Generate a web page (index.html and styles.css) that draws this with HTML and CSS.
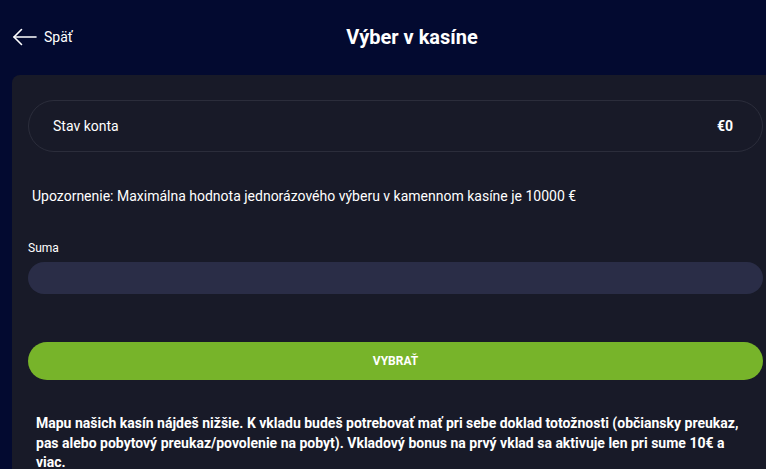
FILE: index.html
```html
<!DOCTYPE html>
<html lang="sk">
<head>
  <meta charset="UTF-8">
  <meta name="viewport" content="width=device-width, initial-scale=1.0">
  <title>Výber v kasíne</title>
  <link rel="stylesheet" href="styles.css">
</head>
<body>
  <header class="topbar">
    <a class="back" href="#">
      <svg class="back-icon" width="25" height="18" viewBox="0 0 25 18" fill="none" stroke="#fff" stroke-width="1.6" stroke-linecap="round" stroke-linejoin="round">
        <path d="M24 9H2"/>
        <path d="M9.5 1.5L2 9l7.5 7.5"/>
      </svg>
      <span>Späť</span>
    </a>
    <h1>Výber v kasíne</h1>
  </header>

  <div class="card">
    <!-- balance -->
    <div class="balance">
      <span>Stav konta</span>
      <strong>€0</strong>
    </div>

    <p class="notice">Upozornenie: Maximálna hodnota jednorázového výberu v kamennom kasíne je 10000 €</p>

    <label class="field-label" for="amount">Suma</label>
    <input class="field" type="text" id="amount">

    <button class="submit">VYBRAŤ</button>

    <p class="info">Mapu našich kasín nájdeš nižšie. K vkladu budeš potrebovať mať pri sebe doklad totožnosti (občiansky preukaz, pas alebo pobytový preukaz/povolenie na pobyt). Vkladový bonus na prvý vklad sa aktivuje len pri sume 10€ a viac.</p>
  </div>
</body>
</html>
```
FILE: styles.css
```css
body {
  margin: 0;
  background-color: #030a30;
  color: #fff;
  font-family: 'Roboto', 'Liberation Sans', sans-serif;
  overflow: hidden;
}
.topbar {
  position: relative;
  height: 75px;
  display: flex;
  align-items: center;
  justify-content: center;
}
.back {
  position: absolute;
  left: 12px;
  top: 28px;
  display: flex;
  align-items: center;
  gap: 7px;
  color: #fff;
  text-decoration: none;
  font-size: 14px;
}
h1 {
  margin: 0 0 2px 58px;
  font-size: 20px;
  font-weight: 700;
}
.card {
  margin-left: 12px;
  padding: 25px 3px 20px 16px;
  background-color: #181a28;
  border-radius: 8px 0 0 0;
  min-height: 400px;
}
.balance {
  height: 50px;
  display: flex;
  align-items: center;
  justify-content: space-between;
  padding: 0 29px 0 24px;
  border: 1px solid #2b2d3b;
  border-radius: 26px;
  font-size: 14px;
}
.notice {
  margin: 35px 0 0 4px;
  font-size: 14px;
  line-height: 18px;
}
.field-label {
  display: block;
  margin-top: 36px;
  font-size: 12px;
}
.field {
  display: block;
  box-sizing: border-box;
  width: 100%;
  height: 32px;
  margin-top: 7px;
  border: none;
  border-radius: 16px;
  background-color: #2a2d47;
}
.submit {
  display: block;
  width: 100%;
  height: 38px;
  margin-top: 48px;
  border: none;
  border-radius: 19px;
  background-color: #77b42a;
  color: #fff;
  font-family: inherit;
  font-size: 12px;
  font-weight: 700;
}
.info {
  margin: 34px 20px 0 8px;
  font-size: 14px;
  font-weight: 700;
  line-height: 19.5px;
}
```
